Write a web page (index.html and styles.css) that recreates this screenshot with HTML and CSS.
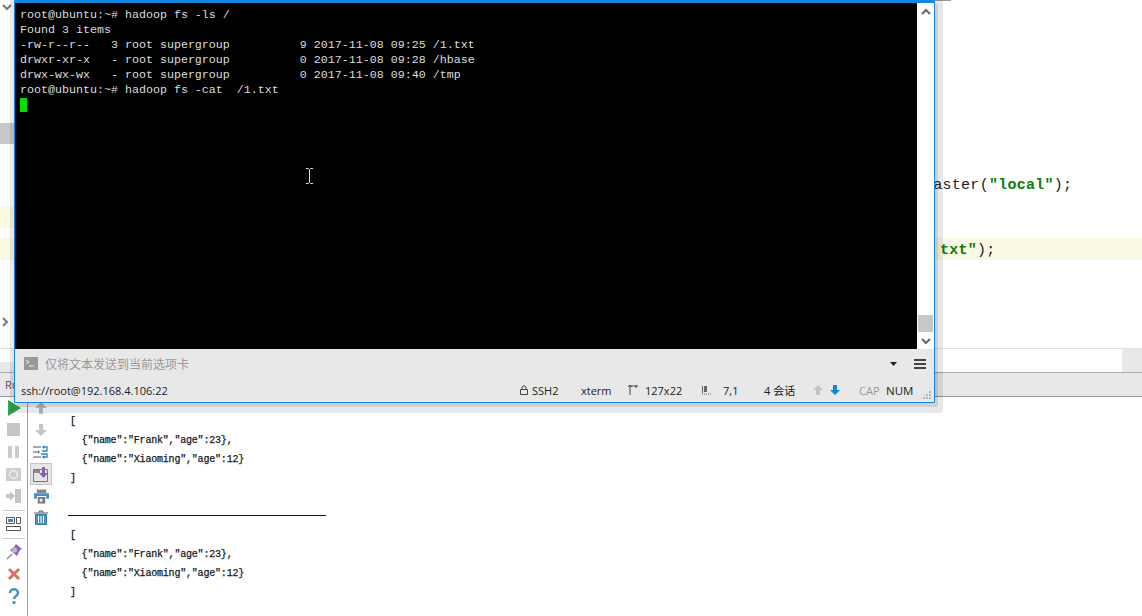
FILE: index.html
```html
<!DOCTYPE html>
<html lang="zh">
<head>
<meta charset="utf-8">
<title>Xshell over IDE</title>
<link rel="stylesheet" href="styles.css">
</head>
<body>
<div class="ide">
  <section class="editor">
    <div class="tabline"></div>
    <svg class="chev" width="12" height="10" viewBox="0 0 12 10"><path d="M2 2l4 4 4-4" fill="none" stroke="#777" stroke-width="2"/></svg>
    <div class="gutter-mark gray"></div>
    <div class="gutter-mark yellow"></div>
    <pre class="code c1">Master(<b>"local"</b>);</pre>
    <pre class="code c2"><b>txt"</b>);</pre>
    <svg class="chev2" width="10" height="12" viewBox="0 0 10 12"><path d="M2 2l4 4-4 4" fill="none" stroke="#777" stroke-width="2"/></svg>
  </section>
  <div class="strip"><div class="strip-l"></div><div class="strip-r"></div></div>
  <div class="tabs"><span class="run-tab">Run</span></div>
  <div class="panel">
    <nav class="tools">
      <button class="tool"><svg width="16" height="16" viewBox="0 0 16 16"><path d="M2 0l13 8-13 8z" fill="#2ea44f"/></svg></button>
      <button class="tool"><svg width="14" height="14" viewBox="0 0 14 14"><rect width="13" height="13" fill="#c6c6c6"/></svg></button>
      <button class="tool"><svg width="14" height="14" viewBox="0 0 14 14"><path d="M1 1h4v12H1zM8 1h4v12H8z" fill="#cbcbcb"/></svg></button>
      <button class="tool"><svg width="16" height="14" viewBox="0 0 16 14"><rect y="1" width="15" height="13" fill="#cdcdcd"/><circle cx="7.500" cy="7.500" r="4" fill="none" stroke="#eee" stroke-width="1.500"/></svg></button>
      <button class="tool"><svg width="16" height="14" viewBox="0 0 16 14"><path d="M9 0h6v14H9z" fill="#ddd"/><path d="M9 0h6v14h-6M0 5h4V2l5 5-5 5V9H0z" fill="#c4c4c4"/></svg></button>
      <hr class="sep">
      <button class="tool"><svg width="15" height="14" viewBox="0 0 15 14"><path d="M.5.500h8v6h-8zM10.500.500h4v6h-4zM.5 9.500h14v4H.5z" fill="none" stroke="#555"/><path d="M2 2h5v3H2z" fill="#3b8fc4"/></svg></button>
      <hr class="sep">
      <button class="tool"><svg width="16" height="16" viewBox="0 0 16 16"><path d="M1 15l5-5" stroke="#888" stroke-width="1.500"/><path d="M10 0l6 5-2 1-3 6-7-6 4-3z" fill="#8f6aa8"/><circle cx="8.500" cy="6" r="2.500" fill="#c8b4d6"/></svg></button>
      <button class="tool"><svg width="14" height="14" viewBox="0 0 14 14"><path d="M2 2l10 10M12 2L2 12" stroke="#d9705c" stroke-width="3"/></svg></button>
      <button class="tool"><svg width="12" height="16" viewBox="0 0 12 16"><path d="M2 5c0-5 8-5 8 0 0 3-4 3-4 6" fill="none" stroke="#4a94c4" stroke-width="2.600"/><rect x="4.600" y="13" width="2.800" height="3" fill="#4a94c4"/></svg></button>
    </nav>
    <nav class="tools second">
      <button class="tool"><svg width="14" height="14" viewBox="0 0 14 14"><path d="M7 1l6 6H9v6H5V7H1z" fill="#bcbcbc"/></svg></button>
      <button class="tool"><svg width="14" height="14" viewBox="0 0 14 14"><path d="M7 13l6-6H9V1H5v6H1z" fill="#c4c4c4"/></svg></button>
      <button class="tool"><svg width="16" height="15" viewBox="0 0 16 15"><path d="M0 2h8M0 7h5M0 12h8" stroke="#555"/><path d="M10 2h4v4h-5M10 12h4V9H8" fill="none" stroke="#2f86bd" stroke-width="1.300"/><path d="M11 0v4l-2-2zM5 5v4l2-2zM11 10v4l-2-2z" fill="#2f86bd"/></svg></button>
      <button class="tool active"><svg width="16" height="15" viewBox="0 0 16 15"><path d="M.5 2.500h14v12H.5z" fill="none" stroke="#777"/><path d="M1 3h6v3H1z" fill="#888"/><path d="M9 0h3v6h3l-4.500 5L6 6h3z" fill="#8a5fb0"/></svg></button>
      <button class="tool"><svg width="15" height="15" viewBox="0 0 16 15"><path d="M3 0h10v4H3z" fill="#888"/><path d="M0 4h16v6h-3V7H3v3H0z" fill="#3f93c6"/><path d="M4 8h8v7H4z" fill="#777"/><path d="M6 10h3v3H6z" fill="#eee"/></svg></button>
      <button class="tool"><svg width="14" height="16" viewBox="0 0 14 16"><path d="M0 3h14M5 2l1-1h2l1 1" stroke="#555" stroke-width="1.200" fill="none"/><path d="M1.500 4.500h11v10h-11z" fill="#4a94c4" stroke="#3b7ca6"/><path d="M4.500 6v7M7 6v7M9.500 6v7" stroke="#fff"/></svg></button>
    </nav>
    <div class="console">
      <pre class="out">[
  {"name":"Frank","age":23},
  {"name":"Xiaoming","age":12}
]</pre>
      <div class="rule"></div>
      <pre class="out">[
  {"name":"Frank","age":23},
  {"name":"Xiaoming","age":12}
]</pre>
    </div>
  </div>
</div>

<div class="window">
  <div class="term-row">
    <pre class="term">root@ubuntu:~# hadoop fs -ls /
Found 3 items
-rw-r--r--   3 root supergroup          9 2017-11-08 09:25 /1.txt
drwxr-xr-x   - root supergroup          0 2017-11-08 09:28 /hbase
drwx-wx-wx   - root supergroup          0 2017-11-08 09:40 /tmp
root@ubuntu:~# hadoop fs -cat  /1.txt
<span class="cursor"></span></pre>
    <svg class="ibeam" width="9" height="16" viewBox="0 0 9 16"><path d="M1 .5h2.500l1 1 1-1H8M4.500 1.500v13M1 15.500h2.500l1-1 1 1H8" fill="none" stroke="#ddd"/></svg>
    <div class="scroll">
      <svg width="12" height="8" viewBox="0 0 12 8"><path d="M2 6l4-4 4 4" fill="none" stroke="#666" stroke-width="2"/></svg>
      <div class="thumb"></div>
      <svg width="12" height="8" viewBox="0 0 12 8"><path d="M2 2l4 4 4-4" fill="none" stroke="#666" stroke-width="2"/></svg>
    </div>
  </div>
  <div class="inputbar">
    <svg width="14" height="13" viewBox="0 0 14 13"><rect width="14" height="13" fill="#999"/><path d="M2 3l3 2-3 2M5 9h5" fill="none" stroke="#eee"/></svg>
    <span class="hint">仅将文本发送到当前选项卡</span>
    <svg class="caret" width="7" height="4" viewBox="0 0 7 4"><path d="M0 0h7L3.500 4z" fill="#222"/></svg>
    <svg class="burger" width="12" height="10" viewBox="0 0 12 10"><path d="M0 1h12M0 5h12M0 9h12" stroke="#444" stroke-width="2"/></svg>
  </div>
  <div class="status">
    <span class="s-addr">ssh://root@192.168.4.106:22</span>
    <svg class="s-lock" width="8" height="10" viewBox="0 0 8 10"><path d="M.5 4.500h7v5h-7zM2 4.500V2q2-3 4 0v2.500" fill="none" stroke="#444"/></svg>
    <span class="s-ssh">SSH2</span>
    <span class="s-xterm">xterm</span>
    <svg class="s-size" width="10" height="10" viewBox="0 0 10 10"><path d="M2 1v9M2 1h8M0 2l2-2 2 2M8 0v3" fill="none" stroke="#444"/></svg>
    <span class="s-dim">127x22</span>
    <svg class="s-pos" width="9" height="10" viewBox="0 0 9 10"><path d="M0 1h1v7H0zM2 1h3v6H2z" fill="#666"/><path d="M0 9h1M2 9h1M4 9h1M6 9h1M8 9h1" stroke="#666"/></svg>
    <span class="s-cur">7,1</span>
    <span class="s-sess">4 会话</span>
    <svg class="s-up" width="10" height="10" viewBox="0 0 10 10"><path d="M5 0l5 5H7v5H3V5H0z" fill="#c4c4c4"/></svg>
    <svg class="s-down" width="10" height="10" viewBox="0 0 10 10"><path d="M5 10l5-5H7V0H3v5H0z" fill="#0f87e0"/></svg>
    <span class="s-cap">CAP</span>
    <span class="s-num">NUM</span>
    <svg class="s-grip" width="9" height="8" viewBox="0 0 9 8"><path d="M6 0h2v2H6zM3 3h2v2H3zM6 3h2v2H6zM0 6h2v2H0zM3 6h2v2H3zM6 6h2v2H6z" fill="#b5b5b5"/></svg>
  </div>
</div>
</body>
</html>
```
FILE: styles.css
```css
* { box-sizing: border-box; }
html, body { margin: 0; padding: 0; height: 100%; overflow: hidden; background: #fff; }
pre { margin: 0; }

.ide { display: flex; flex-direction: column; height: 616px; }
.editor { position: relative; height: 349px; border-bottom: 1px solid #e2e2e2; flex: none; }
.tabline { position: absolute; left: 935px; top: 0; width: 16px; height: 1px; background: #999; }
.chev { position: absolute; left: 1px; top: 3px; }
.chev2 { position: absolute; left: 1px; top: 316px; }
.gutter-mark { position: absolute; left: 0; width: 14px; height: 21px; }
.gutter-mark.gray { top: 123px; background: #c8c8c8; }
.gutter-mark.yellow { top: 207px; background: #fbf8e3; }
.code {
  position: absolute; left: 0; right: 0; height: 22px;
  font: 15px/22px "Liberation Mono", monospace; letter-spacing: .27px; color: #222;
}
.code b { color: #0a7d0a; font-weight: 700; }
.c1 { top: 173px; padding-left: 924px; padding-top: 2px; }
.c2 { top: 238px; padding-left: 940px; padding-top: 2px; background: #fbf8e3; }

.strip { display: flex; justify-content: space-between; height: 23px; flex: none; }
.strip-l { width: 14px; height: 10px; margin-top: 13px; background: #e8e8e8; }
.strip-r { width: 955px; height: 23px; background: linear-gradient(90deg, transparent 935px, #e8e8e8 935px); }
.tabs { height: 25px; flex: none; background: #e8e8e8; border-top: 1px solid #aaa; border-bottom: 1px solid #999; display: flex; align-items: center; }
.run-tab { margin-left: 5px; font: 11px "Open Sans", sans-serif; color: #5a4a6a; }

.panel { flex: 1; display: flex; min-height: 0; }
.tools { width: 28px; flex: none; display: flex; flex-direction: column; align-items: center; border-right: 1px solid #a0a0a0; }
.tools.second { border-right: 0; padding-right: 2px; }
.tool { width: 22px; height: 22px; padding: 0; border: 0; background: none; display: flex; align-items: center; justify-content: center; flex: none; }
.tool.active { background: #e6e6e6; border: 1px solid #c4c4c4; }
.sep { width: 22px; height: 1px; margin: 3px 0 2px; border: 0; background: #c6c6c6; flex: none; }

.console { padding: 15px 0 0 12px; }
.out { font: 10px/19px "Liberation Mono", monospace; -webkit-text-stroke: .25px #222; letter-spacing: -.2px; color: #111; padding-left: 2px; }
.rule { width: 258px; height: 1px; background: #111; margin: 27px 0 10px; }

.window {
  position: absolute; left: 14px; top: 0; width: 921px; height: 403px;
  display: flex; flex-direction: column;
  border: 1px solid #1287e0; border-top-width: 3px; border-radius: 1px;
  background: #e8e8e8;
  box-shadow: 3px 4px 0 0 rgba(0,0,0,.1), 2px 4px 0 6px rgba(0,0,0,.09);
}
.term-row { position: relative; flex: none; height: 346px; display: flex; }
.term {
  flex: 1; background: #000; color: #ddd; padding: 5px 0 0 5px;
  font: 11.67px/15px "Liberation Mono", monospace;
}
.cursor { display: inline-block; width: 7px; height: 14px; background: #00e000; vertical-align: -3px; }
.ibeam { position: absolute; left: 290px; top: 165px; }
.scroll { width: 17px; flex: none; background: #fff; display: flex; flex-direction: column; align-items: center; padding: 5px 0 4px; }
.thumb { width: 15px; height: 17px; background: #c8c8c8; margin-top: auto; margin-bottom: 5px; }
.inputbar { height: 29px; flex: none; display: flex; align-items: center; padding-left: 9px; }
.hint { margin-left: 7px; font: 12px "Noto Sans CJK SC", sans-serif; color: #999; }
.caret { margin-left: auto; }
.burger { margin: 0 8px 0 17px; }
.status { height: 24px; flex: 1; display: flex; align-items: center; font: 11px "Open Sans", sans-serif; color: #222; padding-left: 6px; white-space: nowrap; }
.s-addr { width: 499px; }
.s-ssh { margin-left: 4px; width: 49px; }
.s-xterm { width: 47px; }
.s-dim { margin-left: 7px; width: 57px; }
.s-cur { margin-left: 12px; width: 41px; }
.s-sess { width: 49px; font-family: "Open Sans", "Noto Sans CJK SC", sans-serif; }
.s-down { margin-left: 7px; }
.s-cap { margin-left: 19px; color: #999; width: 27px; }
.s-num { width: 37px; font-size: 11.500px; }
.s-grip { margin-top: 10px; }
```
